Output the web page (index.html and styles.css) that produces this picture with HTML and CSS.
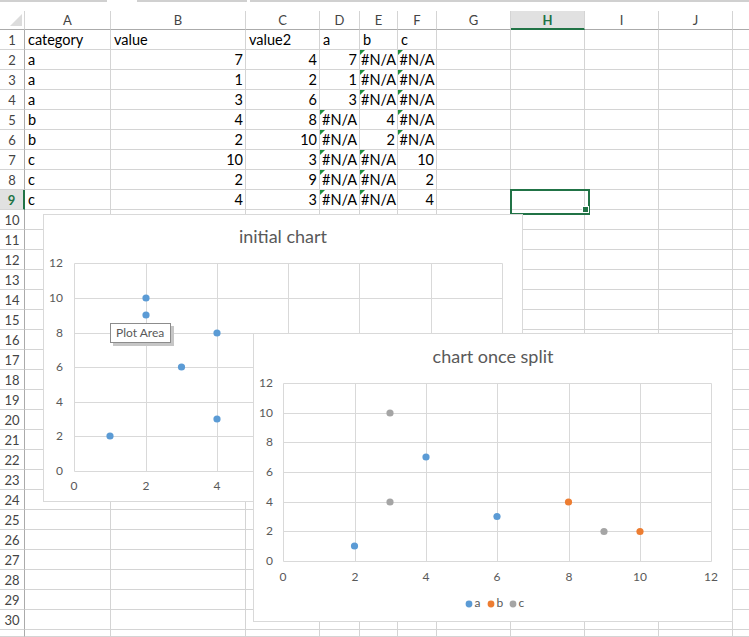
FILE: index.html
```html
<!DOCTYPE html>
<html>
<head>
<meta charset="utf-8">
<link rel="stylesheet" href="styles.css">
</head>
<body>
<div class="topbar"><span class="seg s1"></span><span class="seg s2"></span><span class="seg s3"></span></div>
<div class="sheet">
  <div class="row hdr"><i class="corner"></i><i>A</i><i>B</i><i>C</i><i>D</i><i>E</i><i>F</i><i>G</i><i class="hsel">H</i><i>I</i><i>J</i><i></i></div>
  <div class="row"><i class="rh">1</i><i>category</i><i>value</i><i>value2</i><i>a</i><i>b</i><i>c</i><i></i><i></i><i></i><i></i><i></i></div>
  <div class="row"><i class="rh">2</i><i>a</i><i class="n">7</i><i class="n">4</i><i class="n">7</i><i class="e">#N/A</i><i class="e">#N/A</i><i></i><i></i><i></i><i></i><i></i></div>
  <div class="row"><i class="rh">3</i><i>a</i><i class="n">1</i><i class="n">2</i><i class="n">1</i><i class="e">#N/A</i><i class="e">#N/A</i><i></i><i></i><i></i><i></i><i></i></div>
  <div class="row"><i class="rh">4</i><i>a</i><i class="n">3</i><i class="n">6</i><i class="n">3</i><i class="e">#N/A</i><i class="e">#N/A</i><i></i><i></i><i></i><i></i><i></i></div>
  <div class="row"><i class="rh">5</i><i>b</i><i class="n">4</i><i class="n">8</i><i class="e">#N/A</i><i class="n">4</i><i class="e">#N/A</i><i></i><i></i><i></i><i></i><i></i></div>
  <div class="row"><i class="rh">6</i><i>b</i><i class="n">2</i><i class="n">10</i><i class="e">#N/A</i><i class="n">2</i><i class="e">#N/A</i><i></i><i></i><i></i><i></i><i></i></div>
  <div class="row"><i class="rh">7</i><i>c</i><i class="n">10</i><i class="n">3</i><i class="e">#N/A</i><i class="e">#N/A</i><i class="n">10</i><i></i><i></i><i></i><i></i><i></i></div>
  <div class="row"><i class="rh">8</i><i>c</i><i class="n">2</i><i class="n">9</i><i class="e">#N/A</i><i class="e">#N/A</i><i class="n">2</i><i></i><i></i><i></i><i></i><i></i></div>
  <div class="row"><i class="rh rsel">9</i><i>c</i><i class="n">4</i><i class="n">3</i><i class="e">#N/A</i><i class="e">#N/A</i><i class="n">4</i><i></i><i class="sel"><span class="handle"></span></i><i></i><i></i><i></i></div>
  <div class="row"><i class="rh">10</i><i></i><i></i><i></i><i></i><i></i><i></i><i></i><i></i><i></i><i></i><i></i></div>
  <div class="row"><i class="rh">11</i><i></i><i></i><i></i><i></i><i></i><i></i><i></i><i></i><i></i><i></i><i></i></div>
  <div class="row"><i class="rh">12</i><i></i><i></i><i></i><i></i><i></i><i></i><i></i><i></i><i></i><i></i><i></i></div>
  <div class="row"><i class="rh">13</i><i></i><i></i><i></i><i></i><i></i><i></i><i></i><i></i><i></i><i></i><i></i></div>
  <div class="row"><i class="rh">14</i><i></i><i></i><i></i><i></i><i></i><i></i><i></i><i></i><i></i><i></i><i></i></div>
  <div class="row"><i class="rh">15</i><i></i><i></i><i></i><i></i><i></i><i></i><i></i><i></i><i></i><i></i><i></i></div>
  <div class="row"><i class="rh">16</i><i></i><i></i><i></i><i></i><i></i><i></i><i></i><i></i><i></i><i></i><i></i></div>
  <div class="row"><i class="rh">17</i><i></i><i></i><i></i><i></i><i></i><i></i><i></i><i></i><i></i><i></i><i></i></div>
  <div class="row"><i class="rh">18</i><i></i><i></i><i></i><i></i><i></i><i></i><i></i><i></i><i></i><i></i><i></i></div>
  <div class="row"><i class="rh">19</i><i></i><i></i><i></i><i></i><i></i><i></i><i></i><i></i><i></i><i></i><i></i></div>
  <div class="row"><i class="rh">20</i><i></i><i></i><i></i><i></i><i></i><i></i><i></i><i></i><i></i><i></i><i></i></div>
  <div class="row"><i class="rh">21</i><i></i><i></i><i></i><i></i><i></i><i></i><i></i><i></i><i></i><i></i><i></i></div>
  <div class="row"><i class="rh">22</i><i></i><i></i><i></i><i></i><i></i><i></i><i></i><i></i><i></i><i></i><i></i></div>
  <div class="row"><i class="rh">23</i><i></i><i></i><i></i><i></i><i></i><i></i><i></i><i></i><i></i><i></i><i></i></div>
  <div class="row"><i class="rh">24</i><i></i><i></i><i></i><i></i><i></i><i></i><i></i><i></i><i></i><i></i><i></i></div>
  <div class="row"><i class="rh">25</i><i></i><i></i><i></i><i></i><i></i><i></i><i></i><i></i><i></i><i></i><i></i></div>
  <div class="row"><i class="rh">26</i><i></i><i></i><i></i><i></i><i></i><i></i><i></i><i></i><i></i><i></i><i></i></div>
  <div class="row"><i class="rh">27</i><i></i><i></i><i></i><i></i><i></i><i></i><i></i><i></i><i></i><i></i><i></i></div>
  <div class="row"><i class="rh">28</i><i></i><i></i><i></i><i></i><i></i><i></i><i></i><i></i><i></i><i></i><i></i></div>
  <div class="row"><i class="rh">29</i><i></i><i></i><i></i><i></i><i></i><i></i><i></i><i></i><i></i><i></i><i></i></div>
  <div class="row"><i class="rh">30</i><i></i><i></i><i></i><i></i><i></i><i></i><i></i><i></i><i></i><i></i><i></i></div>
  <div class="row last"><i class="rh"></i><i></i><i></i><i></i><i></i><i></i><i></i><i></i><i></i><i></i><i></i><i></i></div>
</div>

<div class="chart c1">
  <svg width="480" height="288" viewBox="0 0 480 288">
    <rect x="0.5" y="0.5" width="479" height="287" fill="#fff" stroke="#d9d9d9"/>
    <text class="title" x="240" y="29" text-anchor="middle">initial chart</text>
    <g stroke="#d9d9d9" stroke-width="1">
      <line x1="31.5" y1="49.5" x2="459.5" y2="49.5"/>
      <line x1="31.5" y1="84.5" x2="459.5" y2="84.5"/>
      <line x1="31.5" y1="119.5" x2="459.5" y2="119.5"/>
      <line x1="31.5" y1="153.5" x2="459.5" y2="153.5"/>
      <line x1="31.5" y1="188.5" x2="459.5" y2="188.5"/>
      <line x1="31.5" y1="222.5" x2="459.5" y2="222.5"/>
      <line x1="31.5" y1="257.5" x2="459.5" y2="257.5"/>
      <line x1="31.5" y1="49.5" x2="31.5" y2="257.5"/>
      <line x1="103.5" y1="49.5" x2="103.5" y2="257.5"/>
      <line x1="174.5" y1="49.5" x2="174.5" y2="257.5"/>
      <line x1="245.5" y1="49.5" x2="245.5" y2="257.5"/>
      <line x1="316.5" y1="49.5" x2="316.5" y2="257.5"/>
      <line x1="388.5" y1="49.5" x2="388.5" y2="257.5"/>
      <line x1="459.5" y1="49.5" x2="459.5" y2="257.5"/>
    </g>
    <g class="lbl" text-anchor="end">
      <text x="20" y="53">12</text>
      <text x="20" y="88">10</text>
      <text x="20" y="123">8</text>
      <text x="20" y="157">6</text>
      <text x="20" y="192">4</text>
      <text x="20" y="226">2</text>
      <text x="20" y="261">0</text>
    </g>
    <g class="lbl" text-anchor="middle">
      <text x="31" y="276">0</text>
      <text x="103" y="276">2</text>
      <text x="174" y="276">4</text>
      <text x="245" y="276">6</text>
      <text x="316" y="276">8</text>
      <text x="388" y="276">10</text>
      <text x="459" y="276">12</text>
    </g>
    <g fill="#5b9bd5">
      <circle cx="67" cy="222" r="3.6"/>
      <circle cx="103" cy="84" r="3.6"/>
      <circle cx="103" cy="101" r="3.6"/>
      <circle cx="138.5" cy="153" r="3.6"/>
      <circle cx="174" cy="119" r="3.6"/>
      <circle cx="174" cy="205" r="3.6"/>
      <circle cx="281" cy="188" r="3.6"/>
      <circle cx="388" cy="205" r="3.6"/>
    </g>
  </svg>
</div>

<div class="tip">Plot Area</div>

<div class="chart c2">
  <svg width="480" height="289" viewBox="0 0 480 289">
    <rect x="0.5" y="0.5" width="479" height="288" fill="#fff" stroke="#d9d9d9"/>
    <text class="title" x="240" y="30" text-anchor="middle">chart once split</text>
    <g stroke="#d9d9d9" stroke-width="1">
      <line x1="30.5" y1="50.5" x2="458.5" y2="50.5"/>
      <line x1="30.5" y1="80.5" x2="458.5" y2="80.5"/>
      <line x1="30.5" y1="109.5" x2="458.5" y2="109.5"/>
      <line x1="30.5" y1="139.5" x2="458.5" y2="139.5"/>
      <line x1="30.5" y1="169.5" x2="458.5" y2="169.5"/>
      <line x1="30.5" y1="198.5" x2="458.5" y2="198.5"/>
      <line x1="30.5" y1="228.5" x2="458.5" y2="228.5"/>
      <line x1="30.5" y1="50.5" x2="30.5" y2="228.5"/>
      <line x1="102.5" y1="50.5" x2="102.5" y2="228.5"/>
      <line x1="173.5" y1="50.5" x2="173.5" y2="228.5"/>
      <line x1="244.5" y1="50.5" x2="244.5" y2="228.5"/>
      <line x1="316.5" y1="50.5" x2="316.5" y2="228.5"/>
      <line x1="387.5" y1="50.5" x2="387.5" y2="228.5"/>
      <line x1="458.5" y1="50.5" x2="458.5" y2="228.5"/>
    </g>
    <g class="lbl" text-anchor="end">
      <text x="20" y="54">12</text>
      <text x="20" y="84">10</text>
      <text x="20" y="113">8</text>
      <text x="20" y="143">6</text>
      <text x="20" y="173">4</text>
      <text x="20" y="202">2</text>
      <text x="20" y="232">0</text>
    </g>
    <g class="lbl" text-anchor="middle">
      <text x="30" y="248">0</text>
      <text x="102" y="248">2</text>
      <text x="173" y="248">4</text>
      <text x="244" y="248">6</text>
      <text x="316" y="248">8</text>
      <text x="387" y="248">10</text>
      <text x="458" y="248">12</text>
    </g>
    <g fill="#5b9bd5">
      <circle cx="173" cy="124" r="3.6"/>
      <circle cx="101.5" cy="213" r="3.6"/>
      <circle cx="244" cy="183.5" r="3.6"/>
    </g>
    <g fill="#ed7d31">
      <circle cx="315.5" cy="169" r="3.6"/>
      <circle cx="387" cy="198.5" r="3.6"/>
    </g>
    <g fill="#a5a5a5">
      <circle cx="137" cy="80" r="3.6"/>
      <circle cx="351" cy="198.5" r="3.6"/>
      <circle cx="137" cy="169" r="3.6"/>
    </g>
    <g class="lbl">
      <circle cx="216" cy="271" r="3.4" fill="#5b9bd5"/>
      <text x="221.5" y="274">a</text>
      <circle cx="238" cy="271" r="3.4" fill="#ed7d31"/>
      <text x="243.5" y="274">b</text>
      <circle cx="260" cy="271" r="3.4" fill="#a5a5a5"/>
      <text x="265.5" y="274">c</text>
    </g>
  </svg>
</div>
</body>
</html>
```

FILE: styles.css
```css
* { box-sizing: border-box; }
html, body { margin: 0; padding: 0; background: #fff; }
body {
  width: 749px;
  height: 637px;
  overflow: hidden;
  position: relative;
  font-family: Lato, "Liberation Sans", sans-serif;
  color: #000;
}

.topbar { height: 11px; display: flex; align-items: flex-start; }
.seg { height: 2px; background: #d0d0d0; display: block; }
.s1 { width: 107px; }
.s2 { width: 110px; margin-left: 30px; }
.s3 { flex: 1; margin-left: 3px; }

.sheet { width: 749px; }
.row {
  display: grid;
  grid-template-columns: 25px 86px 135px 74px 40px 38px 39px 74px 74px 74px 74px 16px;
  height: 20px;
}
.row.last { height: 7px; overflow: hidden; }
.row > i {
  font-style: normal;
  display: block;
  border-right: 1px solid #d4d4d4;
  border-bottom: 1px solid #d4d4d4;
  font-size: 14.5px;
  line-height: 20px;
  padding: 0 2px 0 3px;
  white-space: nowrap;
  overflow: hidden;
}
.row > i:last-child { border-right: 0; }
.row > i.n { text-align: right; padding-right: 2px; }
.row > i.e { text-align: center; position: relative; padding: 0; }
.row > i.e::before {
  content: "";
  position: absolute;
  left: 0; top: 0;
  border-top: 5px solid #1f8f3e;
  border-right: 5px solid transparent;
}

.row > i.rh {
  border-right-color: #ababab;
  text-align: center;
  color: #444;
  font-size: 13px;
  padding: 0;
}
.row > i.rsel {
  background: #e1e1e1;
  color: #217346;
  font-weight: bold;
  border-right: 2px solid #217346;
}

.hdr { height: 19px; }
.hdr > i {
  text-align: center;
  color: #444;
  font-size: 13px;
  line-height: 18px;
  border-bottom-color: #ababab;
  padding: 0;
}
.hdr > i.hsel {
  background: #e1e1e1;
  color: #217346;
  font-weight: bold;
  border-bottom: 2px solid #217346;
}
.hdr > i.corner { position: relative; }
.hdr > i.corner::after {
  content: "";
  position: absolute;
  right: 2px; bottom: 3px;
  border-bottom: 12px solid #dcdcdc;
  border-left: 12px solid transparent;
}

.row > i.sel { position: relative; overflow: visible; }
.row > i.sel::after {
  content: "";
  position: absolute;
  left: -1px; top: -1px;
  width: 76px; height: 22px;
  border: 2px solid #217346;
}
.handle {
  position: absolute;
  left: 71px; top: 16px;
  width: 7px; height: 7px;
  background: #217346;
  border: 1px solid #fff;
  z-index: 2;
}

.chart { position: absolute; background: #fff; }
.chart svg { display: block; }
.c1 { left: 43px; top: 214px; width: 480px; height: 288px; }
.c2 { left: 253px; top: 333px; width: 480px; height: 289px; }
.title { font-family: Lato, "Liberation Sans", sans-serif; font-size: 18px; fill: #595959; }
.lbl { font-family: Lato, "Liberation Sans", sans-serif; font-size: 12px; fill: #595959; }

.tip {
  position: absolute;
  left: 110px; top: 323px;
  width: 61px; height: 20px;
  border: 1px solid #8c8c8c;
  background: #fff;
  box-shadow: 3px 3px 0 #c6c6c6;
  font-size: 12px;
  line-height: 18px;
  color: #595959;
  padding-left: 5px;
  white-space: nowrap;
  font-family: Lato, "Liberation Sans", sans-serif;
}
```
